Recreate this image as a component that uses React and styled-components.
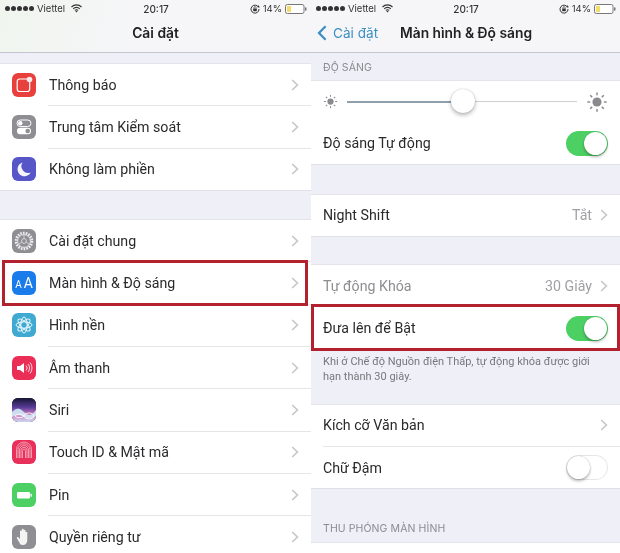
import React from 'react';
import styled, { createGlobalStyle } from 'styled-components';

const Global = createGlobalStyle`
  html, body { margin: 0; padding: 0; background: #fff; }
  body { font-family: Inter, "Noto Sans", "Liberation Sans", sans-serif; color: #222; }
`;
const Screen = styled.div`
  position: relative; width: 620px; height: 553px; overflow: hidden;
  display: grid; grid-template-columns: 311px 309px; filter: blur(0.4px);
`;
const Pane = styled.div`
  height: 553px; overflow: hidden; background: #efeff7;
  display: flex; flex-direction: column;
`;
const Header = styled.header`
  flex: none; height: 53px; box-sizing: border-box;
  background: ${p => p.$tint ? 'linear-gradient(100deg,#f0f5ee 0%,#f6f6f9 45%,#f6f6f8 100%)' : '#f6f6f8'};
  border-bottom: 1px solid #c4c3cf;
`;
const Status = styled.div`
  height: 17px; padding: 0 4px 0 5px; display: grid; grid-template-columns: 1fr auto 1fr; align-items: center;
  font-size: 9.5px; color: #333;
`;
const Carrier = styled.div`display: flex; align-items: center; gap: 3px;`;
const Dots = styled.span`display: inline-flex; gap: 1px;`;
const Dot = styled.i`width: 5px; height: 5px; border-radius: 50%; background: #333; display: block;`;
const Time = styled.div`font-weight: 500; font-size: 10px;`;
const Right = styled.div`display: flex; align-items: center; justify-content: flex-end; gap: 3px;`;
const Nav = styled.div`
  height: 35px; display: flex; align-items: center; justify-content: ${p => p.$center ? 'center' : 'flex-start'};
  font-size: 13.8px; font-weight: 600; color: #222; padding-bottom: 4px; box-sizing: border-box;
`;
const Back = styled.div`
  display: flex; align-items: center; gap: 6px; color: #3d8fc4; font-weight: 400; font-size: 13.6px;
  width: 89px; padding-left: 6px; box-sizing: border-box;
`;
const Gap = styled.div`flex: none; height: ${p => p.$h}px;`;
const Group = styled.section`
  flex: none; background: #fff; border-top: 1px solid #e4e4ea; border-bottom: 1px solid #e0e0e6;
`;
const Row = styled.div`
  height: 41.35px; display: flex; align-items: center; position: relative;
  padding: 0 12px; font-family: Roboto, Inter, sans-serif; font-size: 14.2px;
  color: ${p => p.$muted ? '#8e8e92' : '#2a2a2c'};
  & + & { margin-top: 1px; }
  & + &::before {
    content: ''; position: absolute; top: -1px; right: 0; left: ${p => p.$inset || 12}px;
    height: 1px; background: #e6e6ea;
  }
`;
const Icon = styled.div`
  flex: none; width: 24px; height: 24px; border-radius: 6px; background: ${p => p.$bg}; margin-right: 13px;
  display: flex; align-items: center; justify-content: center; overflow: hidden;
`;
const Label = styled.span`flex: 1; white-space: nowrap;`;
const Value = styled.span`color: #a0a0a4; margin-right: 8px;`;
const Section = styled.div`
  flex: none; height: ${p => p.$h}px; box-sizing: border-box; padding: ${p => p.$pt}px 12px 0;
  font-size: 10.5px; color: #8b8b90; letter-spacing: .1px;
`;
const Note = styled.div`
  flex: none; height: 54px; box-sizing: border-box; padding: 4px 16px 0 12px;
  font-family: Roboto, Inter, sans-serif; font-size: 11px; line-height: 15.5px; color: #77777c;
`;
const SliderRow = styled.div`height: 41.35px; display: flex; align-items: center; padding: 0 12px; gap: 9px;`;
const Track = styled.div`flex: 1; height: 1px; position: relative; background: #cfcfd3;`;
const Fill = styled.div`height: 2px; margin-top: -0.5px; background: #8fa0ad;`;
const Thumb = styled.div`
  position: absolute; top: -12px; width: 24px; height: 24px; border-radius: 50%; background: #fff;
  box-shadow: 0 2px 4px rgba(0,0,0,.3), 0 0 1px rgba(0,0,0,.25);
`;
const Toggle = styled.div`
  flex: none; width: 42px; height: 25px; border-radius: 13px; position: relative;
  background: ${p => p.$on ? '#4cd064' : '#fff'};
  box-shadow: ${p => p.$on ? 'none' : 'inset 0 0 0 1px #e6e6e6'};
  &::after {
    content: ''; position: absolute; top: 1px; left: ${p => p.$on ? '18px' : '1px'};
    width: 23px; height: 23px; border-radius: 50%; background: #fff;
    box-shadow: 0 2px 3px rgba(0,0,0,.28), 0 0 1px rgba(0,0,0,.3);
  }
`;
const Highlight = styled.div`
  position: absolute; left: ${p => p.$x}px; top: ${p => p.$y}px; width: ${p => p.$w}px; height: ${p => p.$h}px;
  box-sizing: border-box; border: 3px solid #b3202e; pointer-events: none;
`;
const AA = styled.span`color: #fff; font-size: ${p => p.$s}px; line-height: 1; font-weight: 400;`;
const AAWrap = styled.div`display: flex; align-items: baseline; gap: 2px;`;

const Chevron = () => (
  <svg width="8" height="12" viewBox="0 0 8 12" style={{ flex: 'none' }}>
    <path d="M1.2 1l5.2 5-5.2 5" fill="none" stroke="#c7c7cc" strokeWidth="1.7" />
  </svg>
);
const BackArrow = () => (
  <svg width="10" height="16" viewBox="0 0 10 16" style={{ flex: 'none' }}>
    <path d="M8.6 1.2 2 8l6.6 6.8" fill="none" stroke="#3d8fc4" strokeWidth="2.3" />
  </svg>
);
const Wifi = () => (
  <svg width="11" height="9" viewBox="0 0 11 9" style={{ marginLeft: 3 }}>
    <path d="M.5 3a7 7 0 0 1 10 0M2.2 4.8a4.6 4.6 0 0 1 6.6 0M3.8 6.4a2.4 2.4 0 0 1 3.4 0" fill="none" stroke="#333" strokeWidth="1.1" />
    <path d="M4.4 7.3a1.6 1.6 0 0 1 2.2 0L5.5 8.6z" fill="#333" />
  </svg>
);
const Lock = () => (
  <svg width="10" height="10" viewBox="0 0 10 10">
    <path d="M8.6 3.4A4 4 0 1 0 9 5" fill="none" stroke="#333" strokeWidth="1" />
    <path d="M7.6 3.2h2.2L8.4 1z" fill="#333" />
    <rect x="3.2" y="4.4" width="3.6" height="2.8" rx=".4" fill="#333" />
    <path d="M3.9 4.5V3.7a1.1 1.1 0 0 1 2.2 0v.8" fill="none" stroke="#333" strokeWidth=".7" />
  </svg>
);
const Battery = () => (
  <svg width="22" height="10" viewBox="0 0 22 10">
    <rect x=".5" y=".5" width="18.5" height="9" rx="1.8" fill="#fff" stroke="#777" />
    <rect x="2" y="2" width="4" height="6" fill="#f3dc6a" />
    <rect x="20" y="3.3" width="1.5" height="3.4" rx=".7" fill="#777" />
  </svg>
);
const StatusBar = () => (
  <Status>
    <Carrier>
      <Dots>{[0, 1, 2, 3, 4].map(i => <Dot key={i} />)}</Dots>
      <span>Viettel</span>
      <Wifi />
    </Carrier>
    <Time>20:17</Time>
    <Right><Lock /><span>14%</span><Battery /></Right>
  </Status>
);

const Svg = ({ children }) => <svg width="24" height="24" viewBox="0 0 24 24">{children}</svg>;
const NotifyIcon = () => (
  <Svg>
    <rect x="5.2" y="6" width="12.5" height="12.5" rx="2.5" fill="#e8403c" stroke="#fff" strokeWidth="1.2" />
    <circle cx="17.5" cy="6.5" r="2.8" fill="#fbeaea" />
  </Svg>
);
const ControlIcon = () => (
  <Svg>
    <rect x="5" y="5" width="14" height="6.5" rx="3.25" fill="#8e8e93" stroke="#fff" />
    <circle cx="8.3" cy="8.2" r="2.2" fill="#fff" />
    <rect x="5" y="12.8" width="14" height="6.5" rx="3.25" fill="#fff" />
    <circle cx="15.7" cy="16" r="2.3" fill="#8e8e93" />
  </Svg>
);
const MoonIcon = () => (
  <Svg><path d="M10.5 5.5a7 7 0 1 0 8.2 10A6.8 6.8 0 0 1 10.5 5.5z" fill="#f4f4fb" /></Svg>
);
const GearIcon = () => (
  <Svg>
    <circle cx="12" cy="12" r="8" fill="none" stroke="#eee" strokeWidth="2.6" strokeDasharray="1.7 1.1" />
    <circle cx="12" cy="12" r="6.4" fill="none" stroke="#eee" strokeWidth=".9" />
    <circle cx="12" cy="12" r="2.4" fill="none" stroke="#ddd" strokeWidth=".9" />
    <path d="M12 9.6V6M9.9 13.2l-3.1 1.8M14.1 13.2l3.1 1.8" stroke="#ddd" strokeWidth=".8" />
  </Svg>
);
const FlowerIcon = () => (
  <Svg>
    {[0, 45, 90, 135].map(a => (
      <ellipse key={a} cx="12" cy="12" rx="3.2" ry="8" fill="none" stroke="#e8f7fb" strokeWidth="1" transform={`rotate(${a} 12 12)`} />
    ))}
  </Svg>
);
const SoundIcon = () => (
  <Svg>
    <path d="M5 10h3l4-3v10l-4-3H5z" fill="#fff" />
    <path d="M14 9.5a3.5 3.5 0 0 1 0 5M16 8a6 6 0 0 1 0 8M18 6.5a8.5 8.5 0 0 1 0 11" fill="none" stroke="#fbd7de" strokeWidth="1" />
  </Svg>
);
const SiriIcon = () => (
  <svg width="24" height="24" viewBox="0 0 24 24">
    <defs>
      <linearGradient id="sg" x1="0" y1="0" x2="0" y2="1">
        <stop offset="0" stopColor="#141432" /><stop offset=".4" stopColor="#5a3e9a" /><stop offset=".7" stopColor="#d77fc0" /><stop offset="1" stopColor="#c9d8f0" />
      </linearGradient>
    </defs>
    <rect width="24" height="24" fill="url(#sg)" />
    <path d="M0 14q6-7 12 0t12-2v6q-6 5-12 1T0 19z" fill="#cfeaf6" opacity=".9" />
    <path d="M3 18a5 3 0 0 1 9 0 5 3 0 0 1-9 0zM12 18a5 3 0 0 1 10 0 5 3 0 0 1-10 0z" fill="none" stroke="#fff" strokeWidth=".8" />
  </svg>
);
const TouchIcon = () => (
  <Svg>
    {[7.5, 6, 4.5, 3, 1.5].map(r => (
      <path key={r} d={`M${12 - r} 18V${11 - r * 0.2}a${r} ${r} 0 0 1 ${2 * r} 0V18`} fill="none" stroke="#f8b7c4" strokeWidth=".8" />
    ))}
  </Svg>
);
const BatteryIcon = () => (
  <Svg>
    <rect x="5" y="9" width="13" height="6.5" rx="1.3" fill="#fff" />
    <rect x="18.5" y="10.7" width="1.3" height="3" rx=".5" fill="#fff" />
  </Svg>
);
const HandIcon = () => (
  <Svg>
    <path d="M8.5 19.5 5 13.5c-.6-1.2.8-2 1.6-1l1.4 1.8V6.5c0-1.3 1.8-1.3 1.8 0V11V4.8c0-1.3 1.9-1.3 1.9 0V11V5.6c0-1.3 1.8-1.3 1.8 0V11.6V7.6c0-1.2 1.8-1.2 1.8 0V15c0 2.5-1.5 5-4 5H11c-1 0-2-.2-2.5-.5z" fill="#f4f4f4" />
  </Svg>
);
const Sun = ({ size }) => (
  <svg width={size} height={size} viewBox="0 0 24 24" style={{ flex: 'none' }}>
    <circle cx="12" cy="12" r="5" fill="#8a8a8e" />
    {[0, 45, 90, 135, 180, 225, 270, 315].map(a => (
      <line key={a} x1="12" y1="1.5" x2="12" y2="4.5" stroke="#8a8a8e" strokeWidth="1.6" transform={`rotate(${a} 12 12)`} />
    ))}
  </svg>
);

const top = [
  { bg: '#e8403c', icon: <NotifyIcon />, label: 'Thông báo' },
  { bg: '#8e8e93', icon: <ControlIcon />, label: 'Trung tâm Kiểm soát' },
  { bg: '#5656c8', icon: <MoonIcon />, label: 'Không làm phiền' },
];
const main = [
  { bg: '#8e8e93', icon: <GearIcon />, label: 'Cài đặt chung' },
  { bg: '#1a7bea', icon: <AAWrap><AA $s={10}>A</AA><AA $s={14}>A</AA></AAWrap>, label: 'Màn hình & Độ sáng' },
  { bg: '#3fa9d2', icon: <FlowerIcon />, label: 'Hình nền' },
  { bg: '#ea2e55', icon: <SoundIcon />, label: 'Âm thanh' },
  { bg: '#222', icon: <SiriIcon />, label: 'Siri' },
  { bg: '#e8305a', icon: <TouchIcon />, label: 'Touch ID & Mật mã' },
  { bg: '#4cd064', icon: <BatteryIcon />, label: 'Pin' },
  { bg: '#8e8e93', icon: <HandIcon />, label: 'Quyền riêng tư' },
];
const Setting = ({ item }) => (
  <Row $inset={48}>
    <Icon $bg={item.bg}>{item.icon}</Icon>
    <Label>{item.label}</Label>
    <Chevron />
  </Row>
);

export default function App() {
  return (
    <Screen>
      <Global />
      <Pane>
        <Header $tint>
          <StatusBar />
          <Nav $center>Cài đặt</Nav>
        </Header>
        <Gap $h={10} />
        <Group>{top.map(i => <Setting key={i.label} item={i} />)}</Group>
        <Gap $h={28} />
        <Group>{main.map(i => <Setting key={i.label} item={i} />)}</Group>
      </Pane>
      <Pane>
        <Header>
          <StatusBar />
          <Nav>
            <Back><BackArrow />Cài đặt</Back>
            Màn hình & Độ sáng
          </Nav>
        </Header>
        <Section $h={27} $pt={8}>ĐỘ SÁNG</Section>
        <Group>
          <SliderRow>
            <Sun size={15} />
            <Track>
              <Fill style={{ width: '50.6%' }} />
              <Thumb style={{ left: 'calc(50.6% - 12px)' }} />
            </Track>
            <Sun size={22} />
          </SliderRow>
          <Row><Label>Độ sáng Tự động</Label><Toggle $on /></Row>
        </Group>
        <Gap $h={29} />
        <Group>
          <Row><Label>Night Shift</Label><Value>Tắt</Value><Chevron /></Row>
        </Group>
        <Gap $h={27} />
        <Group>
          <Row $muted><Label>Tự động Khóa</Label><Value>30 Giây</Value><Chevron /></Row>
          <Row><Label>Đưa lên để Bật</Label><Toggle $on /></Row>
        </Group>
        <Note>Khi ở Chế độ Nguồn điện Thấp, tự động khóa được giới hạn thành 30 giây.</Note>
        <Group>
          <Row><Label>Kích cỡ Văn bản</Label><Chevron /></Row>
          <Row><Label>Chữ Đậm</Label><Toggle /></Row>
        </Group>
        <Section $h={53} $pt={33}>THU PHÓNG MÀN HÌNH</Section>
        <Group><Row /></Group>
      </Pane>
      <Highlight $x={2} $y={260} $w={306} $h={46} />
      <Highlight $x={311} $y={304} $w={309} $h={47} />
    </Screen>
  );
}
